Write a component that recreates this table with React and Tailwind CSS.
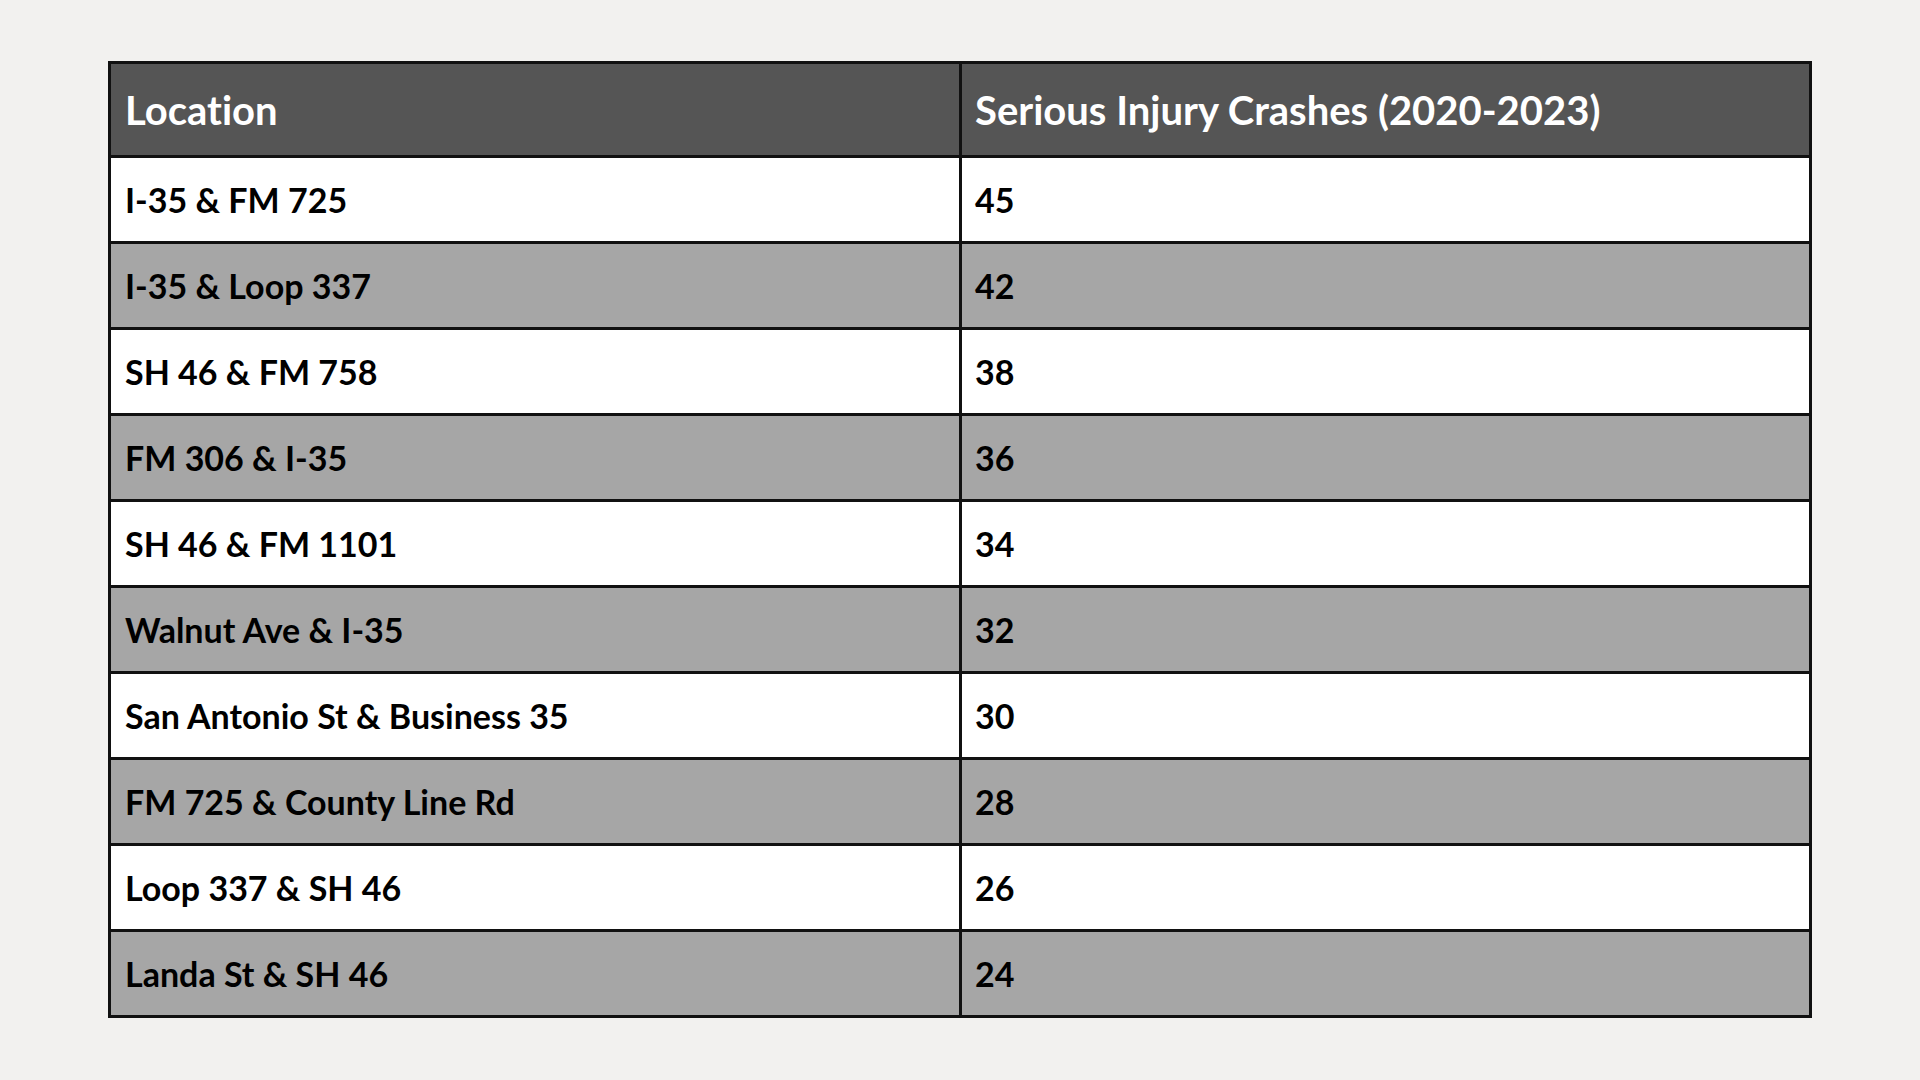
const rows = [
  ["I-35 & FM 725", "45"],
  ["I-35 & Loop 337", "42"],
  ["SH 46 & FM 758", "38"],
  ["FM 306 & I-35", "36"],
  ["SH 46 & FM 1101", "34"],
  ["Walnut Ave & I-35", "32"],
  ["San Antonio St & Business 35", "30"],
  ["FM 725 & County Line Rd", "28"],
  ["Loop 337 & SH 46", "26"],
  ["Landa St & SH 46", "24"],
];

export default function App() {
  return (
    <div
      className="w-[1920px] h-[1080px] bg-[#f2f1ef] px-[108px] pt-[61px] pb-[62px] [font-variant-ligatures:none]"
      style={{ fontFamily: "Lato, 'Open Sans', sans-serif" }}
    >
      <div className="border-[3px] border-[#111111] flex flex-col">
        {/* header */}
        <div className="grid grid-cols-[848px_1fr] h-[91px] bg-[#555555] text-white font-bold text-[40px]">
          <div className="flex items-center pl-[14px]">Location</div>
          <div className="flex items-center pl-[13px] border-l-[3px] border-[#111111]">
            Serious Injury Crashes (2020-2023)
          </div>
        </div>

        {rows.map(([loc, n], i) => (
          <div
            key={loc}
            className={
              "grid grid-cols-[848px_1fr] h-[86px] border-t-[3px] border-[#111111] text-black font-bold text-[34px] " +
              (i % 2 === 0 ? "bg-white" : "bg-[#a6a6a6]")
            }
          >
            <div className="flex items-center pl-[14px]">{loc}</div>
            <div className="flex items-center pl-[13px] border-l-[3px] border-[#111111]">{n}</div>
          </div>
        ))}
      </div>
    </div>
  );
}
